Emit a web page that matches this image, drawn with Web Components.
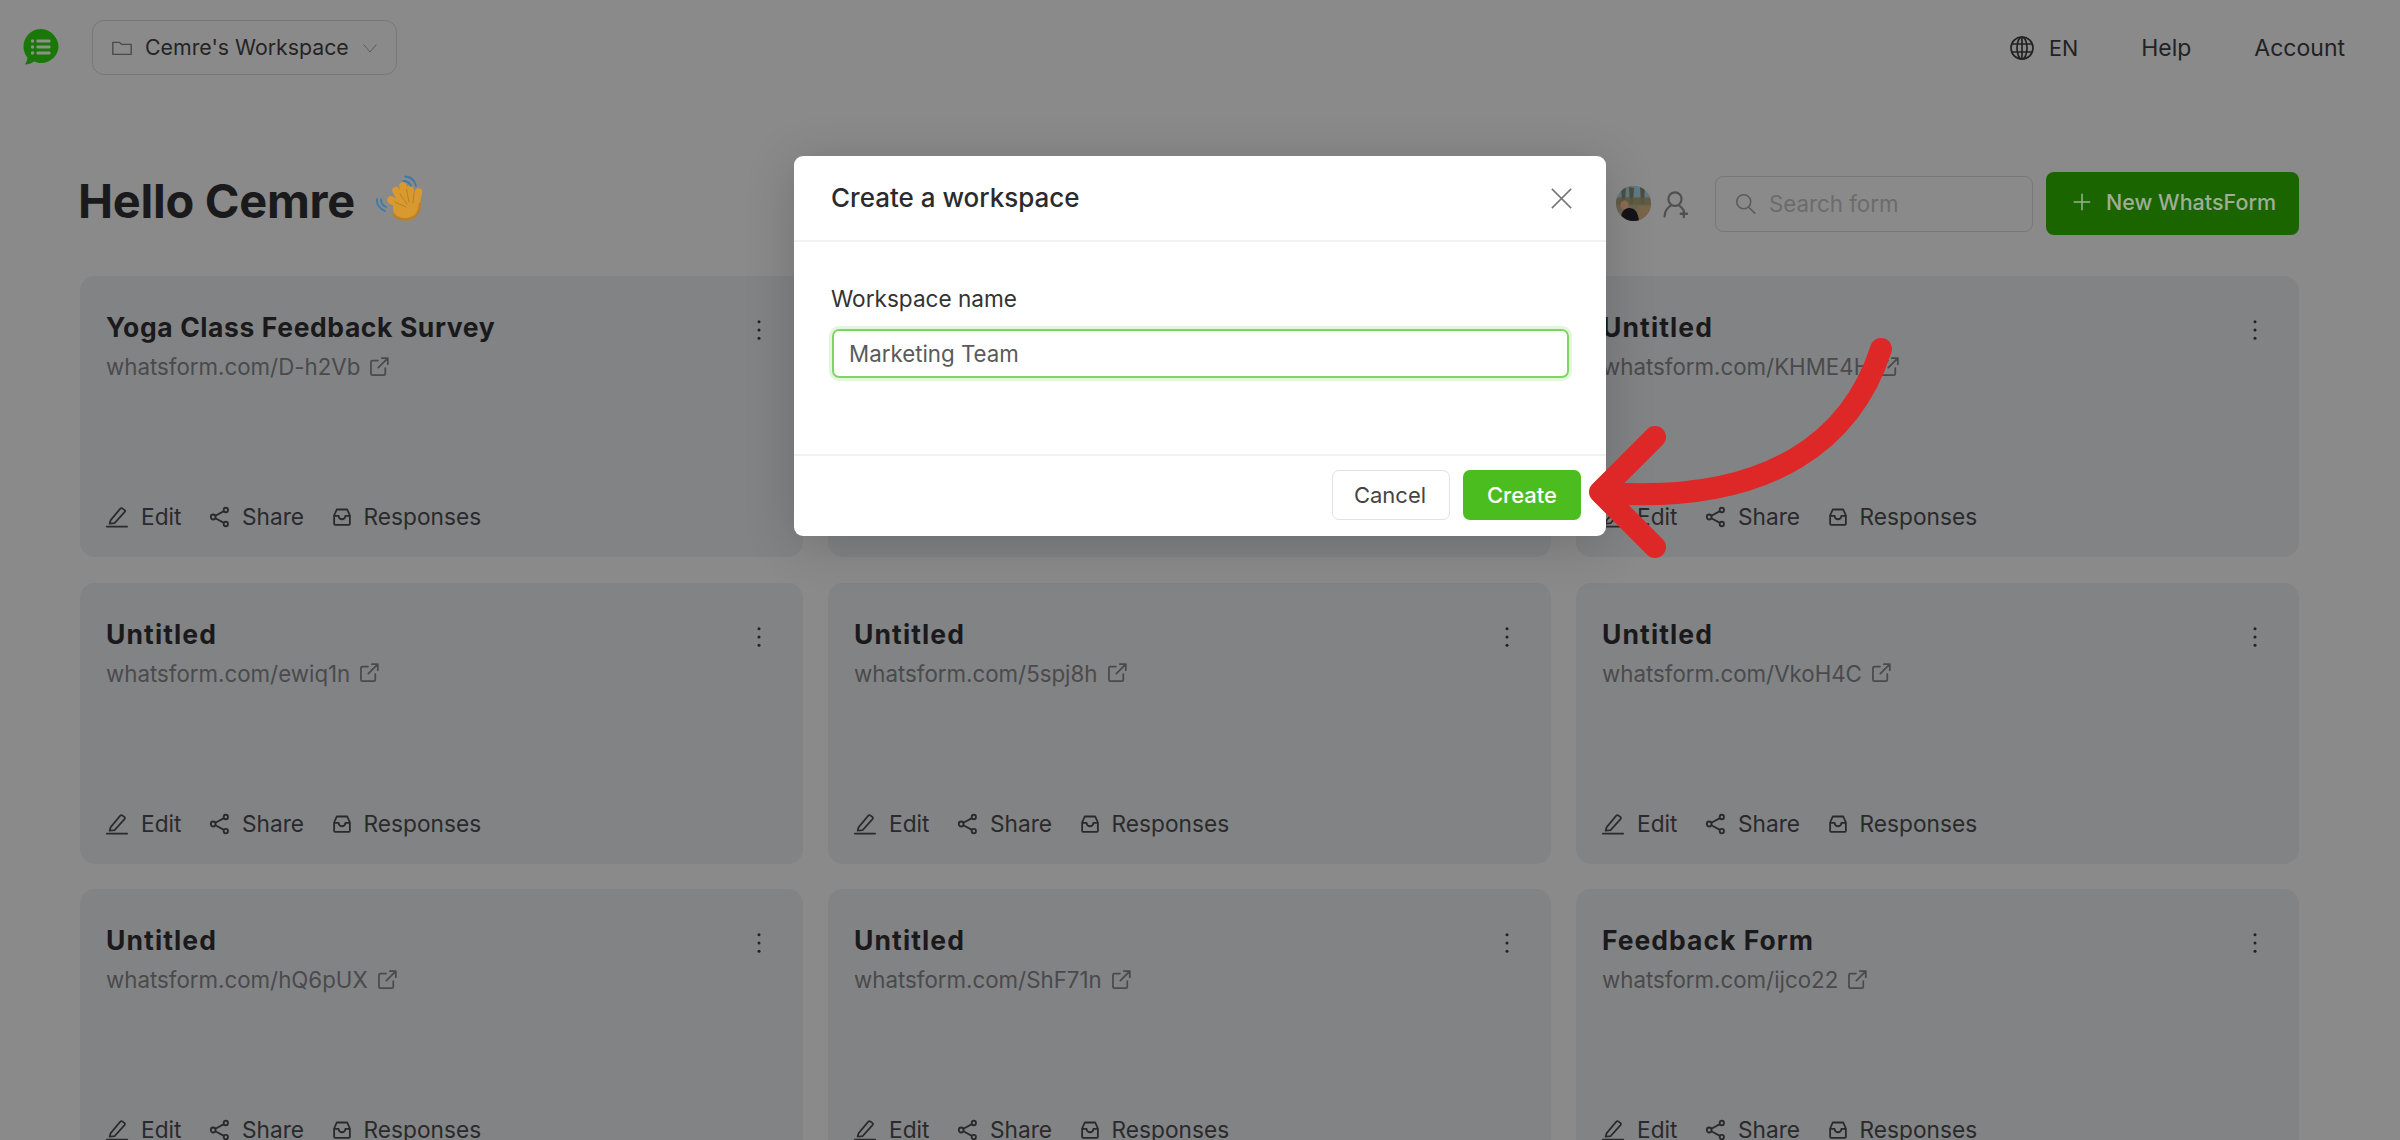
<!DOCTYPE html>
<html lang="en"><head><meta charset="utf-8"><title>WhatsForm</title>
<style>
html,body{margin:0;padding:0;height:1140px;overflow:hidden;background:#8a8a8a}
body{font-family:Inter,"Liberation Sans",sans-serif;color:#1b1b1d}
.un{letter-spacing:1.1px}.ff{letter-spacing:1px}
</style></head><body>
<wf-app>
  <wf-topbar></wf-topbar>
  <wf-heading>Hello Cemre</wf-heading>
  <wf-grid>
    <wf-card><span slot="title">Yoga Class Feedback Survey</span><span slot="url">whatsform.com/D-h2Vb</span></wf-card>
    <wf-card hidden-content></wf-card>
    <wf-card><span slot="title" class="un">Untitled</span><span slot="url">whatsform.com/KHME4H</span></wf-card>
    <wf-card><span slot="title" class="un">Untitled</span><span slot="url">whatsform.com/ewiq1n</span></wf-card>
    <wf-card><span slot="title" class="un">Untitled</span><span slot="url">whatsform.com/5spj8h</span></wf-card>
    <wf-card><span slot="title" class="un">Untitled</span><span slot="url">whatsform.com/VkoH4C</span></wf-card>
    <wf-card><span slot="title" class="un">Untitled</span><span slot="url">whatsform.com/hQ6pUX</span></wf-card>
    <wf-card><span slot="title" class="un">Untitled</span><span slot="url">whatsform.com/ShF71n</span></wf-card>
    <wf-card><span slot="title" class="ff">Feedback Form</span><span slot="url">whatsform.com/ijco22</span></wf-card>
  </wf-grid>
  <wf-modal heading="Create a workspace" label="Workspace name" value="Marketing Team"></wf-modal>
  <wf-arrow></wf-arrow>
</wf-app>
<script>
const ICONS={
 folder:'<path d="M1 3.500h8l2.500 3H23v15H1z" fill="none" stroke="currentColor" stroke-width="1.700" stroke-linejoin="round"/>',
 chevron:'<path d="M1 6l11 13L23 6" fill="none" stroke="currentColor" stroke-width="1.700"/>',
 globe:'<g fill="none" stroke="currentColor" stroke-width="1.700"><circle cx="12" cy="12" r="11"/><ellipse cx="12" cy="12" rx="5" ry="11"/><path d="M12 1v22M1.800 8h20.400M1.800 16h20.400"/></g>',
 search:'<g fill="none" stroke="currentColor" stroke-width="1.800" stroke-linecap="round"><circle cx="10" cy="10" r="8"/><path d="M16 16.500l6.500 6.500"/></g>',
 plus:'<path d="M12 1v22M1 12h22" fill="none" stroke="currentColor" stroke-width="2"/>',
 external:'<g fill="none" stroke="currentColor" stroke-width="2.200" stroke-linecap="round" stroke-linejoin="round"><path d="M10 4.500H3A1.800 1.800 0 0 0 1.200 6.300V21A1.800 1.800 0 0 0 3 22.800h14.500a1.800 1.800 0 0 0 1.800-1.800v-7"/><path d="M15 1.500h7.500V9M22.500 1.500L10.500 13.500"/></g>',
 edit:'<g fill="none" stroke="currentColor" stroke-width="2" stroke-linecap="round" stroke-linejoin="round"><path d="M5 16L15.500 2.200a1.800 1.800 0 0 1 2.500-.3l2 1.500a1.800 1.800 0 0 1 .3 2.500L9.500 19.300l-5.500.8z"/><path d="M1 23.500h22" stroke-width="2.200"/></g>',
 share:'<g fill="none" stroke="currentColor" stroke-width="2.300"><circle cx="4" cy="12" r="3"/><circle cx="20" cy="3.500" r="2.700"/><circle cx="20" cy="20.500" r="2.700"/><path d="M6.800 10.500l10.800-5.600M6.800 13.500l10.800 5.600"/></g>',
 inbox:'<g fill="none" stroke="currentColor" stroke-width="2.400" stroke-linejoin="round"><path d="M1.500 10L5 2h14l3.500 8v11a1.500 1.500 0 0 1-1.500 1.500H3A1.500 1.500 0 0 1 1.500 21z"/><path d="M1.500 10.500H7.500a4.500 4.500 0 0 0 9 0h6"/></g>',
 kebab:'<g fill="currentColor"><circle cx="12" cy="2" r="1.800"/><circle cx="12" cy="12" r="1.800"/><circle cx="12" cy="22" r="1.800"/></g>',
 close:'<path d="M1 1l22 22M23 1L1 23" fill="none" stroke="currentColor" stroke-width="1.800"/>',
 useradd:'<g fill="none" stroke="currentColor" stroke-width="2.100" stroke-linecap="round"><circle cx="11.500" cy="7.500" r="6.300"/><path d="M7.500 13.500C4 15.500 1.800 19 1.500 23.500M15.500 13.500c1.500.9 2.700 2 3.500 3.300"/><path d="M20 18v6M17 21h6" stroke-width="2.200"/></g>'
};
class Base extends HTMLElement{
  constructor(){super();this.attachShadow({mode:'open'});}
}
class WfIcon extends Base{
  connectedCallback(){
    const n=this.getAttribute('name');
    this.shadowRoot.innerHTML=`<style>:host{display:inline-block;flex:none;line-height:0}svg{width:100%;height:100%;display:block;overflow:visible}</style><svg viewBox="0 0 24 24" preserveAspectRatio="none" aria-hidden="true">${ICONS[n]||''}</svg>`;
  }
}
class WfApp extends Base{
  constructor(){super();this.shadowRoot.innerHTML=`<style>:host{display:block;position:relative;width:2400px;height:1140px;overflow:hidden;background:#8a8a8a}</style><slot></slot>`;}
}
class WfLogo extends Base{
  constructor(){super();this.shadowRoot.innerHTML=`<style>:host{display:block;width:36px;height:36px;flex:none}svg{display:block;width:36px;height:36px}</style>
  <svg viewBox="0 0 36 36"><path d="M18 0C8.300 0 .500 7.800 .500 17.500c0 4.300 1.500 8.200 4 11.300-.3 2.500-1.500 5-2.500 6.700 3.500 0 6.500-1.300 9-3 2.100.9 4.500 1.500 7 1.500 9.700 0 17.500-7.800 17.500-16.500S27.700 0 18 0z" fill="#1a7808"/>
  <g fill="#8c9288"><circle cx="9.500" cy="12" r="1.700"/><circle cx="9.500" cy="18" r="1.700"/><circle cx="9.500" cy="24" r="1.700"/><rect x="13.500" y="10.500" width="14" height="3" rx="1"/><rect x="13.500" y="16.500" width="14" height="3" rx="1"/><rect x="13.500" y="22.500" width="14" height="3" rx="1"/></g></svg>`;}
}
class WfWorkspaceButton extends Base{
  constructor(){super();this.shadowRoot.innerHTML=`<style>:host{display:flex;align-items:center;box-sizing:border-box;width:305px;height:55px;border:1.500px solid #787878;border-radius:12px;padding-left:19px;font-size:21.300px;color:#242426;flex:none}
  .f{width:20px;height:16px;margin:2px 13px 0 0;color:#4a4a4a}.c{width:14px;height:14px;margin:2px 0 0 14px;color:#5a5a5a}</style>
  <wf-icon class="f" name="folder"></wf-icon><slot></slot><wf-icon class="c" name="chevron"></wf-icon>`;}
}
class WfNav extends Base{
  constructor(){super();this.shadowRoot.innerHTML=`<style>:host{display:flex;align-items:center;font-size:23px;color:#222224;margin-left:auto;padding-top:1px}
  wf-icon{width:24px;height:24px;margin-right:15px;color:#222}.h{margin-left:63px}.e{font-size:21.500px}</style>
  <wf-icon name="globe"></wf-icon><span class="e">EN</span><span class="h">Help</span><span class="h">Account</span>`;}
}
class WfTopbar extends Base{
  constructor(){super();this.shadowRoot.innerHTML=`<style>:host{display:flex;align-items:center;box-sizing:border-box;height:94px;padding:0 55px 0 23px}wf-logo{margin-right:33px}</style>
  <wf-logo></wf-logo><wf-workspace-button>Cemre's Workspace</wf-workspace-button><wf-nav></wf-nav>`;}
}
class WfWave extends Base{
  constructor(){super();this.shadowRoot.innerHTML=`<style>:host{display:block;width:48px;height:48px;flex:none}svg{display:block;width:48px;height:48px}</style>
  <svg viewBox="0 0 48 48"><g fill="none" stroke-linecap="round"><g stroke="#d8992e" stroke-width="7.500"><path d="M28 33L15 25M28 30L20 15.500M31 28L27 11M35 28L34 14.500M39 34L42.500 17"/></g><ellipse cx="30" cy="33" rx="13" ry="12" fill="#d8992e"/><path d="M19 27L30 32M24 19L31 29M30.500 14L33 27M38 18L37 28" stroke="#b97f2a" stroke-width="1"/><path d="M17 39c4 5 12 7 19 4 5-2 8-8 8-14" stroke="#bd8029" stroke-width="2.500"/>
  <g stroke="#3f79a6" stroke-width="1.800"><path d="M29 1.500Q38 2 40 11M27.500 6Q33 6 35 11M1 24Q0 32 9 36M5 24.500Q5 30 10 32"/></g></g></svg>`;}
}
class WfAvatar extends Base{
  constructor(){super();this.shadowRoot.innerHTML=`<style>:host{display:block;width:35px;height:35px;flex:none}svg{display:block;width:35px;height:35px}</style>
  <svg viewBox="0 0 35 35"><defs><clipPath id="c"><circle cx="17.500" cy="17.500" r="17.500"/></clipPath></defs><g clip-path="url(#c)"><rect width="35" height="35" fill="#6d6350"/><rect width="35" height="11" fill="#5f7a88"/><path d="M5 0l5 0-1 17H6zM24 0h5l-1 18h-3zM13 1l5 1-1 16h-3z" fill="#4d4e3e"/><path d="M0 12h35v7H0z" fill="#5c5b43" opacity=".75"/><rect x="22" y="20" width="13" height="15" fill="#7b6549"/><ellipse cx="8.500" cy="19" rx="4" ry="4.500" fill="#8f6c54"/><path d="M5 35c0-7 1-12 8-13 6 0 9 4 10 13z" fill="#141318"/></g></svg>`;}
}
class WfSearch extends Base{
  constructor(){super();this.shadowRoot.innerHTML=`<style>:host{display:flex;align-items:center;box-sizing:border-box;width:318px;height:56px;border:1.500px solid #787878;border-radius:8px;padding-left:19px;font-size:22.300px;color:#6c6c6c;flex:none}
  wf-icon{width:21px;height:21px;margin-right:13px;color:#5c5c5c}</style><wf-icon name="search"></wf-icon><slot></slot>`;}
}
class WfPrimary extends Base{
  constructor(){super();this.shadowRoot.innerHTML=`<style>:host{display:flex;align-items:center;box-sizing:border-box;width:253px;height:63px;background:#1a6500;border-radius:8px;padding:0 0 3px 27px;font-size:21.500px;font-weight:500;color:#a0ad98;flex:none}
  wf-icon{width:18px;height:18px;margin-right:15px}</style><wf-icon name="plus"></wf-icon><slot></slot>`;}
}
class WfHeading extends Base{
  constructor(){super();this.shadowRoot.innerHTML=`<style>:host{display:flex;align-items:center;height:63px;margin-top:78px;padding:0 101px 0 78px}
  h1{margin:0 0 6px;font-size:47px;font-weight:700;color:#1a1a1c;letter-spacing:-.3px;line-height:1}wf-wave{margin:-10px 0 0 21px}
  .r{margin-left:auto;display:flex;align-items:center}wf-avatar{margin-right:12px}.u{width:25px;height:26px;color:#505050;margin-right:27px}wf-search{margin-right:13px}</style>
  <h1><slot></slot></h1><wf-wave></wf-wave><div class="r"><wf-avatar></wf-avatar><wf-icon class="u" name="useradd"></wf-icon><wf-search>Search form</wf-search><wf-primary>New WhatsForm</wf-primary></div>`;}
}
class WfGrid extends Base{
  constructor(){super();this.shadowRoot.innerHTML=`<style>:host{display:grid;grid-template-columns:repeat(3,1fr);gap:25.500px 25px;margin:41px 101px 0 80px}</style><slot></slot>`;}
}
class WfAction extends Base{
  connectedCallback(){
    const w=this.getAttribute('w');
    this.shadowRoot.innerHTML=`<style>:host{display:inline-flex;align-items:center;gap:13px;font-size:22.700px;color:#2a2a2c;line-height:30px}wf-icon{width:${w}px;height:${this.getAttribute('h')||20}px;color:#2a2a2c}</style><wf-icon name="${this.getAttribute('icon')}"></wf-icon><slot></slot>`;
  }
}
class WfCard extends Base{
  connectedCallback(){
    const empty=this.hasAttribute('hidden-content');
    this.shadowRoot.innerHTML=`<style>:host{display:flex;flex-direction:column;position:relative;box-sizing:border-box;height:281px;background:#828385;border-radius:15px;padding:35px 26px 25px}
    .t{font-size:26.500px;font-weight:700;line-height:32px;letter-spacing:.6px;color:#1a1a1c}
    .u{display:flex;align-items:center;gap:10px;font-size:22.300px;line-height:30px;color:#4a4a4c;margin-top:9px}.u wf-icon{width:19px;height:19px;color:#4a4a4c;margin-top:-2px}
    .a{margin-top:auto;display:flex;gap:28.500px}.k{position:absolute;right:34px;top:44px;width:20px;height:20px;color:#222}</style>`+
    (empty?'':`<div class="t"><slot name="title"></slot></div><wf-icon class="k" name="kebab"></wf-icon><div class="u"><slot name="url"></slot><wf-icon name="external"></wf-icon></div><div class="a"><wf-action icon="edit" w="22">Edit</wf-action><wf-action icon="share" w="19">Share</wf-action><wf-action icon="inbox" w="18" h="18">Responses</wf-action></div>`);
  }
}
class WfModal extends Base{
  connectedCallback(){
    this.shadowRoot.innerHTML=`<style>:host{display:flex;flex-direction:column;position:absolute;left:794px;top:156px;width:812px;height:380px;background:#fff;border-radius:9px;box-shadow:0 8px 50px rgba(0,0,0,.18);color:#2b2b2d}
    .h{display:flex;align-items:center;justify-content:space-between;box-sizing:border-box;height:86px;padding:0 34px 0 37px;border-bottom:2px solid #f2f2f2;font-size:26px;font-weight:500}
    .h span{margin-top:-1px}.h wf-icon{width:21px;height:21px;color:#777}
    .b{flex:1;padding:0 37px 0 38px;box-sizing:border-box}
    label{display:block;margin-top:42px;margin-left:-1px;font-size:22.600px;line-height:30px;color:#333}
    .i{box-sizing:border-box;height:49px;margin-top:15px;border:2px solid #7ed562;border-radius:7px;box-shadow:0 0 0 3px #e4f6dd;display:flex;align-items:center;padding:0 0 1px 15px;font-size:22.300px;color:#5a5a5a}
    .f{display:flex;justify-content:flex-end;gap:13px;box-sizing:border-box;height:82px;padding:14px 25px 16px;border-top:2px solid #f2f2f2}
    .btn{box-sizing:border-box;width:118px;height:50px;border-radius:7px;display:flex;align-items:center;justify-content:center;font-size:22px;font-weight:500}
    .c{border:1.500px solid #e2e2e2;color:#444;font-weight:400;padding-right:2px}.g{background:#4bbd1f;color:#fff}</style>
    <div class="h"><span>${this.getAttribute('heading')}</span><wf-icon name="close"></wf-icon></div>
    <div class="b"><label>${this.getAttribute('label')}</label><div class="i">${this.getAttribute('value')}</div></div>
    <div class="f"><div class="btn c">Cancel</div><div class="btn g">Create</div></div>`;
  }
}
class WfArrow extends Base{
  constructor(){super();this.shadowRoot.innerHTML=`<style>:host{position:absolute;left:0;top:0;width:2400px;height:1140px;pointer-events:none;display:block}svg{display:block}</style>
  <svg width="2400" height="1140" viewBox="0 0 2400 1140"><g fill="none" stroke="#de2828" stroke-width="22" stroke-linecap="round" stroke-linejoin="round"><path d="M1881 349C1853 436 1775 505 1604 493"/><path d="M1655 437L1600 492L1655 547"/></g></svg>`;}
}
const defs={'wf-icon':WfIcon,'wf-app':WfApp,'wf-logo':WfLogo,'wf-workspace-button':WfWorkspaceButton,'wf-nav':WfNav,'wf-topbar':WfTopbar,'wf-wave':WfWave,'wf-avatar':WfAvatar,'wf-search':WfSearch,'wf-primary':WfPrimary,'wf-heading':WfHeading,'wf-grid':WfGrid,'wf-action':WfAction,'wf-card':WfCard,'wf-modal':WfModal,'wf-arrow':WfArrow};
for(const k in defs)customElements.define(k,defs[k]);
</script>
</body></html>
